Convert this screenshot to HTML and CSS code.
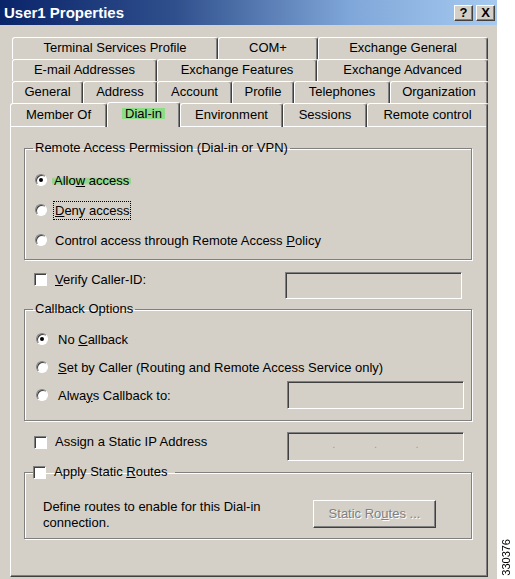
FILE: index.html
```html
<!DOCTYPE html>
<html lang="en">
<head>
	<meta charset="UTF-8">
	<title>User1 Properties</title>
	<link rel="stylesheet" href="styles.css">
</head>
<body>
	<div class="dialog">
		<div class="titlebar">
			<span class="title">User1 Properties</span>
			<div class="caption">
				<span class="cbtn">?</span>
				<span class="cbtn">X</span>
			</div>
		</div>

		<div class="tabs">
			<div class="row r1">
				<div class="tab">Terminal Services Profile</div>
				<div class="tab">COM+</div>
				<div class="tab">Exchange General</div>
			</div>
			<div class="row r2">
				<div class="tab">E-mail Addresses</div>
				<div class="tab">Exchange Features</div>
				<div class="tab">Exchange Advanced</div>
			</div>
			<div class="row r3">
				<div class="tab">General</div>
				<div class="tab">Address</div>
				<div class="tab">Account</div>
				<div class="tab">Profile</div>
				<div class="tab">Telephones</div>
				<div class="tab">Organization</div>
			</div>
			<div class="row r4">
				<div class="tab">Member Of</div>
				<div class="tab current"><span class="mark">Dial-in</span></div>
				<div class="tab">Environment</div>
				<div class="tab">Sessions</div>
				<div class="tab">Remote control</div>
			</div>
		</div>

		<div class="panel">
			<fieldset class="group g1">
				<legend>Remote Access Permission (Dial-in or VPN)</legend>
				<div class="opt"><span class="radio on"></span><span class="glow">Allo<u>w</u> access</span></div>
				<div class="opt"><span class="radio"></span><span class="focus"><u>D</u>eny access</span></div>
				<div class="opt"><span class="radio"></span><span>Control access through Remote Access <u>P</u>olicy</span></div>
			</fieldset>

			<div class="line verify">
				<span class="check"></span><span class="lbl"><u>V</u>erify Caller-ID:</span>
				<span class="field f-verify"></span>
			</div>

			<fieldset class="group g2">
				<legend>Callback Options</legend>
				<div class="opt"><span class="radio on"></span><span>No <u>C</u>allback</span></div>
				<div class="opt"><span class="radio"></span><span><u>S</u>et by Caller (Routing and Remote Access Service only)</span></div>
				<div class="opt"><span class="radio"></span><span>Alwa<u>y</u>s Callback to:</span><span class="field f-call"></span></div>
			</fieldset>

			<div class="line ip">
				<span class="check"></span><span class="lbl">Assign a Static IP Address</span>
				<span class="field f-ip"><i>.</i><i>.</i><i>.</i></span>
			</div>

			<fieldset class="group g3">
				<legend><span class="check"></span><span class="lbl">Apply Static <u>R</u>outes</span></legend>
				<div class="routes">
					<p>Define routes to enable for this Dial-in<br>connection.</p>
					<span class="button">Static Ro<u>u</u>tes ...</span>
				</div>
			</fieldset>
		</div>
	</div>
	<div class="side"><span>330376</span></div>
</body>
</html>
```

FILE: styles.css
```css
*{
	margin: 0;
	padding: 0;
	box-sizing: border-box;
}
body{
	display: flex;
	background: #fff;
	font-family: "Liberation Sans", Arial, sans-serif;
	font-size: 13px;
	color: #000;
}
.dialog{
	width: 497px;
	height: 579px;
	background: #d4d0c8;
}
.titlebar{
	height: 25px;
	display: flex;
	align-items: center;
	justify-content: space-between;
	padding: 0 2px 0 4px;
	background: linear-gradient(to right, #0a246a, #2f4f8c 35%, #7fa6d8 70%, #a6caf0);
}
.title{
	color: #fff;
	font-weight: bold;
	font-size: 15px;
}
.caption{
	display: flex;
	gap: 3px;
}
.cbtn{
	width: 19px;
	height: 16px;
	background: #d4d0c8;
	border: 1px solid;
	border-color: #fff #404040 #404040 #fff;
	box-shadow: inset -1px -1px #808080;
	font-weight: bold;
	font-size: 13px;
	line-height: 14px;
	text-align: center;
}

/* tabs */
.tabs{
	padding-top: 12px;
}
.row{
	display: grid;
	height: 22px;
	margin-left: 12px;
	width: 476px;
}
.r1{ grid-template-columns: 206px 100px 170px; }
.r2{ grid-template-columns: 145px 160px 171px; }
.r3{ grid-template-columns: 71px 74px 75px 62px 96px 98px; }
.r4{
	grid-template-columns: 97px 73px 103px 84px 121px;
	margin-left: 10px;
	width: 478px;
	height: 23px;
}
.tab{
	border-top: 1px solid #fff;
	border-left: 1px solid #fff;
	border-right: 1px solid #404040;
	box-shadow: inset -1px 0 #808080;
	border-radius: 3px 3px 0 0;
	text-align: center;
	line-height: 20px;
	white-space: nowrap;
}
.r4 .tab{
	line-height: 21px;
}
.r4 .current{
	position: relative;
	z-index: 1;
	height: 25px;
	margin-top: -1px;
	background: #d4d0c8;
	line-height: 21px;
}
.mark{
	padding: 0 3px;
	background: linear-gradient(transparent 2px, #8fdc88 2px, #8fdc88 13px, transparent 13px);
}

/* page */
.panel{
	margin-left: 10px;
	width: 478px;
	height: 451px;
	border: 1px solid;
	border-color: #fff #404040 #404040 #fff;
	box-shadow: inset -1px -1px #808080;
	padding: 13px 15px 0 13px;
}
.group{
	border: 1px solid #808080;
	box-shadow: inset 1px 1px #fff, 1px 1px #fff;
	padding: 0 10px;
}
.group legend{
	margin-left: -2px;
	padding: 0 2px;
	line-height: 16px;
}
.opt{
	display: flex;
	align-items: center;
}
.g1{
	padding-top: 9px;
	padding-bottom: 4px;
}
.g1 .opt{
	height: 30px;
}
.g2{
	margin-top: 2px;
	padding-top: 8px;
	padding-right: 7px;
	padding-bottom: 11px;
}
.g2 .opt{
	height: 28px;
}
.radio{
	width: 12px;
	height: 12px;
	border-radius: 50%;
	border: 1px solid;
	border-color: #808080 #fff #fff #808080;
	box-shadow: inset 1px 1px #404040;
	background: #fff;
	margin-right: 8px;
	flex: none;
	display: flex;
	align-items: center;
	justify-content: center;
}
.g2 .radio{
	margin-left: 1px;
	margin-right: 10px;
}
.radio.on::after{
	content: "";
	width: 4px;
	height: 4px;
	border-radius: 50%;
	background: #000;
}
.glow{
	padding: 0 2px;
	margin-left: -3px;
	background: linear-gradient(transparent 4px, rgba(130, 215, 120, .75) 6px, rgba(130, 215, 120, .75) 10px, transparent 12px);
}
.focus{
	outline: 1px dotted #000;
	outline-offset: 1px;
}
.check{
	width: 13px;
	height: 13px;
	border: 1px solid;
	border-color: #808080 #fff #fff #808080;
	box-shadow: inset 1px 1px #404040;
	background: #fff;
	flex: none;
}
.line{
	display: flex;
	align-items: flex-start;
	padding-left: 10px;
	padding-right: 10px;
}
.line .check{
	margin-top: 1px;
}
.lbl{
	margin-left: 8px;
	line-height: 16px;
}
.verify{
	margin-top: 12px;
}
.ip{
	margin-top: 11px;
	padding-right: 8px;
}
.ip .check{
	margin-top: 4px;
}
.ip .lbl{
	margin-top: 2px;
}
.field{
	margin-left: auto;
	width: 177px;
	height: 27px;
	border: 1px solid;
	border-color: #808080 #fff #fff #808080;
	box-shadow: inset 1px 1px #404040;
	flex: none;
}
.f-call{
	height: 28px;
}
.f-ip{
	height: 29px;
	display: flex;
	justify-content: space-around;
	padding: 0 25px;
	color: #a09c94;
	font-size: 11px;
	line-height: 22px;
}
.f-ip i{
	font-style: normal;
}
.g3{
	margin-top: 3px;
	padding: 19px 0 7px 18px;
}
.g3 legend{
	display: flex;
	align-items: center;
	margin-left: -10px;
	padding: 0 8px 0 0;
}
.routes{
	display: flex;
	align-items: center;
}
.routes p{
	line-height: 16px;
	width: 270px;
}
.button{
	width: 123px;
	height: 28px;
	border: 1px solid;
	border-color: #fff #404040 #404040 #fff;
	box-shadow: inset -1px -1px #808080;
	text-align: center;
	line-height: 25px;
	color: #808080;
	text-shadow: 1px 1px #fff;
	margin-top: -3px;
}
.side{
	flex: 1;
	display: flex;
	flex-direction: column;
	justify-content: flex-end;
	align-items: center;
	padding-bottom: 3px;
}
.side span{
	writing-mode: vertical-rl;
	transform: rotate(180deg);
	font-size: 11px;
}
```
